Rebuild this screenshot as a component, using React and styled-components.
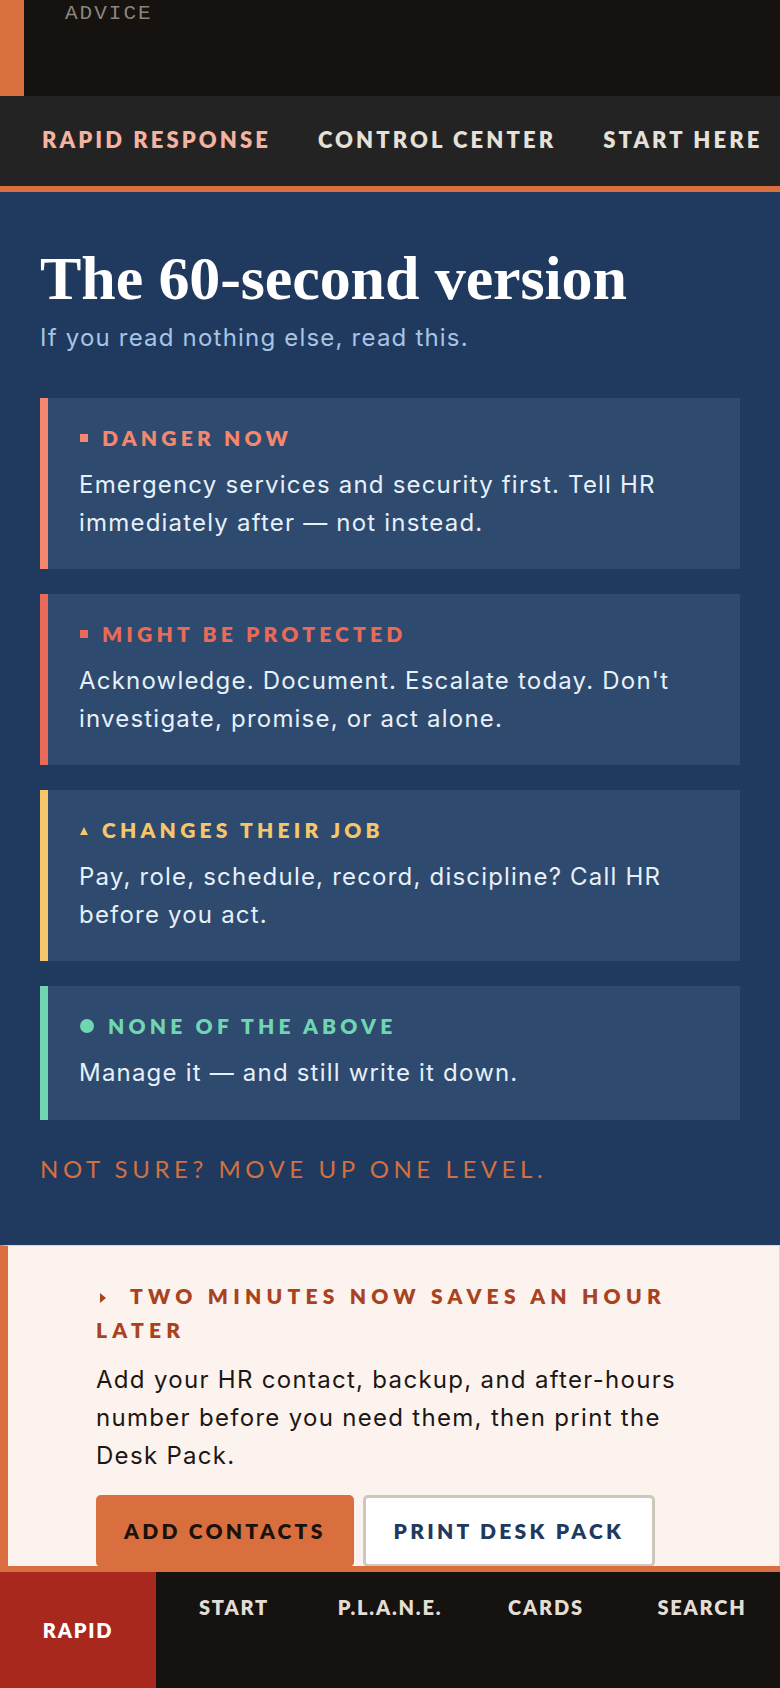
import React from 'react';
import styled, { createGlobalStyle } from 'styled-components';

const GlobalStyle = createGlobalStyle`
  html, body { margin: 0; padding: 0; }
  body {
    background: #fdf3ee;
    font-family: Inter, "Noto Sans", sans-serif;
    -webkit-font-smoothing: antialiased;
  }
  * { box-sizing: border-box; }
`;

const ORANGE = '#d96f3e';
const DISPLAY = 'Lato, "Noto Sans", sans-serif';

const Page = styled.div`
  padding-bottom: 122px;
`;

const TopBar = styled.header`
  height: 96px;
  background: #15120f;
  border-left: 24px solid ${ORANGE};
  padding: 3px 41px 0;
`;

const Eyebrow = styled.div`
  font-family: "Liberation Mono", "DejaVu Sans Mono", monospace;
  font-size: 21px;
  line-height: 22px;
  letter-spacing: 2px;
  color: #8b857c;
`;

const SectionNav = styled.nav`
  display: flex;
  align-items: center;
  gap: 47px;
  height: 96px;
  padding: 0 0 3px 42px;
  background: #232323;
  border-bottom: 6px solid ${ORANGE};
  overflow: hidden;
  white-space: nowrap;
`;

const NavLink = styled.a`
  font-family: ${DISPLAY};
  font-weight: 800;
  font-size: 22px;
  letter-spacing: 0.14em;
  color: ${p => (p.$active ? '#f4b3a0' : '#e6e1d8')};
  text-decoration: none;
`;

const Hero = styled.section`
  background: #203a5f;
  padding: 53px 40px 59px;
`;

const Title = styled.h1`
  margin: 0;
  font-family: "Liberation Serif", "DejaVu Serif", serif;
  font-weight: 700;
  font-size: 62px;
  line-height: 66px;
  color: #ffffff;
  letter-spacing: -0.1px;
`;

const Subtitle = styled.p`
  margin: 10px 0 0;
  font-size: 24px;
  line-height: 33px;
  letter-spacing: 1.2px;
  color: #a8c4e4;
`;

const CardList = styled.div`
  margin-top: 44px;
  display: flex;
  flex-direction: column;
  gap: 25px;
`;

const Card = styled.div`
  background: #2e4a6e;
  border-left: 8px solid ${p => p.$tone};
  padding: 26px 32px 28px 31px;
`;

const CardLabel = styled.div`
  display: flex;
  align-items: center;
  gap: 14px;
  font-family: ${DISPLAY};
  font-weight: 800;
  font-size: 21px;
  line-height: 28px;
  letter-spacing: 0.2em;
  color: ${p => p.$tone};
`;

const Marker = styled.span`
  flex: none;
  display: inline-block;
  background: ${p => (p.$shape === 'triangle' ? 'transparent' : p.$tone)};
  width: ${p => (p.$shape === 'circle' ? 14 : p.$shape === 'triangle' ? 0 : 8)}px;
  height: ${p => (p.$shape === 'circle' ? 14 : p.$shape === 'triangle' ? 0 : 8)}px;
  border-radius: ${p => (p.$shape === 'circle' ? '50%' : '0')};
  margin-left: 1px;
  ${p =>
    p.$shape === 'triangle'
      ? `border-left: 4.5px solid transparent; border-right: 4.5px solid transparent; border-bottom: 8px solid ${p.$tone}; margin-top: 2px;`
      : ''}
`;

const CardBody = styled.p`
  margin: 14px 0 0;
  font-size: 24px;
  line-height: 37.5px;
  letter-spacing: 1.2px;
  color: #e6f0fa;
`;

const Note = styled.p`
  margin: 32px 0 0;
  font-family: ${DISPLAY};
  font-weight: 400;
  font-size: 24px;
  line-height: 34px;
  letter-spacing: 0.19em;
  color: #d3703f;
`;

const Callout = styled.section`
  background: #fdf3ee;
  border: 1px solid #ecd2c2;
  border-left: 8px solid ${ORANGE};
  padding: 33px 88px 32px 88px;
`;

const CalloutTitle = styled.h2`
  margin: 0;
  font-family: ${DISPLAY};
  font-weight: 800;
  font-size: 21px;
  line-height: 34px;
  letter-spacing: 0.25em;
  color: #a9431f;
`;

const Caret = styled.span`
  display: inline-block;
  width: 0;
  height: 0;
  border-top: 5px solid transparent;
  border-bottom: 5px solid transparent;
  border-left: 6px solid #a9431f;
  margin: 0 24px 1px 4px;
`;

const CalloutBody = styled.p`
  margin: 14px 0 0;
  font-size: 24px;
  line-height: 38px;
  letter-spacing: 1.3px;
  color: #1c1714;
`;

const Actions = styled.div`
  display: flex;
  gap: 9px;
  margin-top: 20px;
`;

const Button = styled.button`
  height: 72px;
  padding: 0 28px;
  border-radius: 5px;
  font-family: ${DISPLAY};
  font-weight: 800;
  font-size: 21px;
  letter-spacing: 0.155em;
  cursor: pointer;
  background: ${p => (p.$variant === 'primary' ? ORANGE : '#ffffff')};
  color: ${p => (p.$variant === 'primary' ? '#1c120c' : '#1f3a5f')};
  border: ${p => (p.$variant === 'primary' ? 'none' : '3px solid #cdc7bc')};
`;

const BottomNav = styled.nav`
  position: fixed;
  left: 0;
  right: 0;
  bottom: 0;
  height: 122px;
  border-top: 6px solid ${ORANGE};
  background: #15120f;
  display: grid;
  grid-template-columns: repeat(5, 1fr);
`;

const Tab = styled.a`
  display: flex;
  justify-content: center;
  align-items: ${p => (p.$active ? 'center' : 'flex-start')};
  padding-top: ${p => (p.$active ? 0 : 23)}px;
  background: ${p => (p.$active ? '#a8281e' : 'transparent')};
  color: ${p => (p.$active ? '#ffffff' : '#e3ddd3')};
  font-family: ${DISPLAY};
  font-weight: 800;
  font-size: 20px;
  line-height: 24px;
  letter-spacing: 0.09em;
  text-decoration: none;
`;

const levels = [
  {
    tone: '#f4876e',
    shape: 'square',
    label: 'DANGER NOW',
    body: 'Emergency services and security first. Tell HR immediately after — not instead.',
  },
  {
    tone: '#ea6a58',
    shape: 'square',
    label: 'MIGHT BE PROTECTED',
    body: "Acknowledge. Document. Escalate today. Don't investigate, promise, or act alone.",
  },
  {
    tone: '#f6c76a',
    shape: 'triangle',
    label: 'CHANGES THEIR JOB',
    body: 'Pay, role, schedule, record, discipline? Call HR before you act.',
  },
  {
    tone: '#6fd6b1',
    shape: 'circle',
    label: 'NONE OF THE ABOVE',
    body: 'Manage it — and still write it down.',
  },
];

const tabs = ['RAPID', 'START', 'P.L.A.N.E.', 'CARDS', 'SEARCH'];

export default function App() {
  return (
    <Page>
      <GlobalStyle />
      <TopBar>
        <Eyebrow>ADVICE</Eyebrow>
      </TopBar>
      <SectionNav>
        <NavLink $active>RAPID RESPONSE</NavLink>
        <NavLink>CONTROL CENTER</NavLink>
        <NavLink>START HERE</NavLink>
      </SectionNav>
      <Hero>
        <Title>The 60-second version</Title>
        <Subtitle>If you read nothing else, read this.</Subtitle>
        <CardList>
          {levels.map(l => (
            <Card key={l.label} $tone={l.tone}>
              <CardLabel $tone={l.tone}>
                <Marker $shape={l.shape} $tone={l.tone} />
                {l.label}
              </CardLabel>
              <CardBody>{l.body}</CardBody>
            </Card>
          ))}
        </CardList>
        <Note>NOT SURE? MOVE UP ONE LEVEL.</Note>
      </Hero>
      <Callout>
        <CalloutTitle>
          <Caret />
          TWO MINUTES NOW SAVES AN HOUR LATER
        </CalloutTitle>
        <CalloutBody>
          Add your HR contact, backup, and after-hours number before you need them, then print the Desk Pack.
        </CalloutBody>
        <Actions>
          <Button $variant="primary">ADD CONTACTS</Button>
          <Button $variant="secondary">PRINT DESK PACK</Button>
        </Actions>
      </Callout>
      <BottomNav>
        {tabs.map((t, i) => (
          <Tab key={t} $active={i === 0}>
            {t}
          </Tab>
        ))}
      </BottomNav>
    </Page>
  );
}
